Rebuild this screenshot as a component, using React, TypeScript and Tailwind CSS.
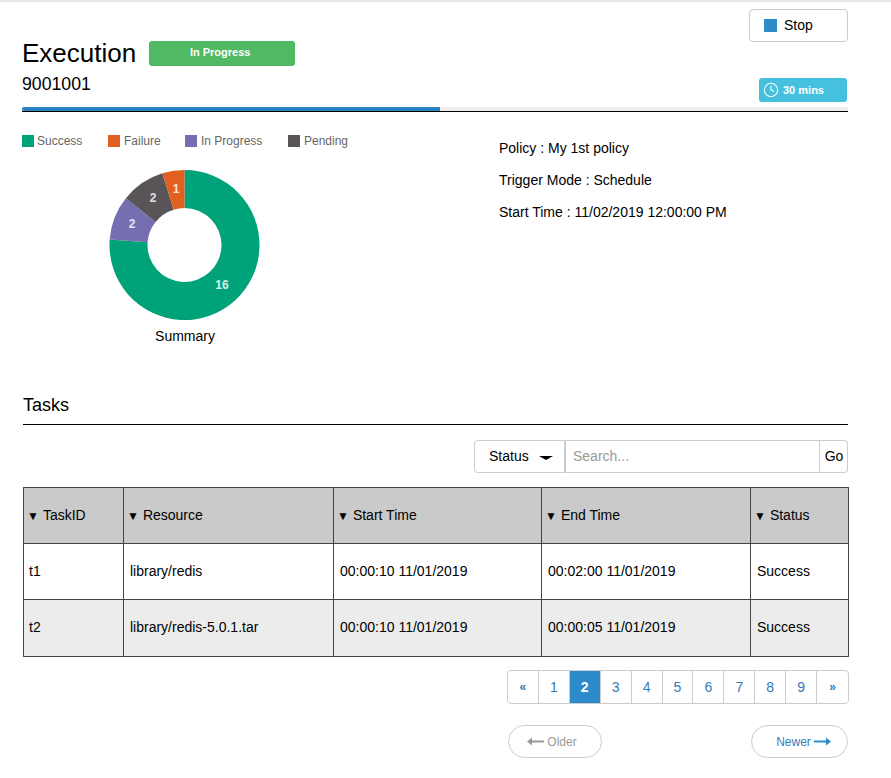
import { Clock } from 'lucide-react'

const legend = [
  { label: 'Success', color: 'bg-[#00a279]', width: 'w-[86px]', gap: 'mr-[3px]' },
  { label: 'Failure', color: 'bg-[#e2601f]', width: 'w-[77px]', gap: 'mr-[4px]' },
  { label: 'In Progress', color: 'bg-[#756eb1]', width: 'w-[103px]', gap: 'mr-[4px]' },
  { label: 'Pending', color: 'bg-[#595458]', width: 'w-[70px]', gap: 'mr-[4px]' },
]

const info = ['Policy : My 1st policy', 'Trigger Mode : Schedule', 'Start Time : 11/02/2019 12:00:00 PM']

const columns = [
  { label: 'TaskID', width: 'w-[100px]' },
  { label: 'Resource', width: 'w-[210px]' },
  { label: 'Start Time', width: 'w-[208px]' },
  { label: 'End Time', width: 'w-[209px]' },
  { label: 'Status', width: 'w-[98px]' },
]

const tasks = [
  { id: 't1', resource: 'library/redis', start: '00:00:10 11/01/2019', end: '00:02:00 11/01/2019', status: 'Success' },
  { id: 't2', resource: 'library/redis-5.0.1.tar', start: '00:00:10 11/01/2019', end: '00:00:05 11/01/2019', status: 'Success' },
]

const pages = ['«', '1', '2', '3', '4', '5', '6', '7', '8', '9', '»']

// donut slices, clockwise from 12 o'clock
const slices = [
  { value: 16, color: '#00a279' },
  { value: 2, color: '#756eb1' },
  { value: 2, color: '#595458' },
  { value: 1, color: '#e2601f' },
]

function slicePath(from: number, to: number) {
  const r1 = 75
  const r2 = 37
  const c = 75.5
  const pt = (r: number, a: number) => `${c + r * Math.sin(a)} ${c + 0.5 - r * Math.cos(a)}`
  const large = to - from > Math.PI ? 1 : 0
  return `M${pt(r1, from)} A${r1} ${r1} 0 ${large} 1 ${pt(r1, to)} L${pt(r2, to)} A${r2} ${r2} 0 ${large} 0 ${pt(r2, from)} Z`
}

function Donut() {
  let start = 0
  return (
    <svg width="152" height="152" viewBox="0 0 152 152" className="block">
      {slices.map((s) => {
        const end = start + (s.value / 21) * Math.PI * 2
        const d = slicePath(start, end)
        start = end
        return <path key={s.color} d={d} fill={s.color} />
      })}
      <g className="text-[12px] font-bold" textAnchor="middle" fontFamily="Liberation Sans, sans-serif">
        <text x="113" y="120" fill="#d8efe8">16</text>
        <text x="23" y="59" fill="#e3e2ef">2</text>
        <text x="44" y="33" fill="#e3e2e3">2</text>
        <text x="67" y="24" fill="#f8e0d3">1</text>
      </g>
    </svg>
  )
}

export default function App() {
  return (
    <main className="h-[778px] w-[891px] overflow-hidden border-t-2 border-[#e7e7e7] bg-white pl-[22px] pr-[43px] font-['Liberation_Sans',sans-serif] text-black">
      <div className="flex h-[105px] justify-between">
        <div className="pt-[38px]">
          <div className="flex h-[27px] items-center">
            <h1 className="text-[26px] leading-[27px]">Execution</h1>
            <span className="ml-[13px] flex h-[25px] w-[146px] items-center justify-center rounded-[3px] bg-[#50b964] pb-[2px] pr-[4px] text-[11px] font-bold text-white">
              In Progress
            </span>
          </div>
          <p className="mt-[5px] text-[17.7px] leading-[24px]">9001001</p>
        </div>
        <div className="flex flex-col items-end">
          <button className="mt-[7px] flex h-[33px] w-[99px] items-center rounded-[4px] border border-[#cccccc] pl-[14px] text-[14px]">
            <span className="mr-[7px] h-[13px] w-[13px] bg-[#2e8bcb]" />
            Stop
          </button>
          <span className="mr-[1px] mt-[36px] flex h-[24px] w-[88px] items-center gap-[4px] rounded-[3px] bg-[#45c0de] pl-[4px] text-[11px] font-bold text-white">
            <Clock size={16} strokeWidth={1.6} />
            30 mins
          </span>
        </div>
      </div>

      <div className="h-[4px] w-[826px] bg-[#eeeeee]">
        <div className="h-[4px] w-[418px] rounded-l-[2px] bg-[#2b83c4]" />
      </div>
      <div className="h-px w-[826px] bg-black" />

      <div className="flex h-[279px]">
        <div className="w-[477px]">
          <div className="flex pt-[23px]">
            {legend.map((item) => (
              <div key={item.label} className={`flex h-[12px] items-center ${item.width}`}>
                <span className={`h-[12px] w-[12px] ${item.gap} ${item.color}`} />
                <span className="text-[12px] text-[#666666]">{item.label}</span>
              </div>
            ))}
          </div>
          <div className="ml-[87px] mt-[22px] w-[152px]">
            <Donut />
            <p className="mt-[5px] text-center text-[14px] leading-[20px]">Summary</p>
          </div>
        </div>
        <div className="flex flex-col gap-[12px] pt-[26px] text-[14px] leading-[20px]">
          {info.map((line) => (
            <p key={line}>{line}</p>
          ))}
        </div>
      </div>

      <h2 className="ml-px mt-[2px] text-[18px] leading-[24px]">Tasks</h2>
      <div className="ml-px mt-[7px] h-px w-[825px] bg-black" />

      <div className="mt-[15px] flex h-[33px] justify-end text-[14px]">
        <button className="flex w-[91px] items-center rounded-l-[4px] border border-[#cccccc] pl-[14px]">
          Status
          <span className="ml-[10px] mt-[2px] h-0 w-0 border-x-[7px] border-t-[4px] border-x-transparent border-t-black" />
        </button>
        <input
          placeholder="Search..."
          className="w-[255px] border border-[#cccccc] pl-[7px] outline-none placeholder:text-[#999999]"
        />
        <button className="w-[28px] rounded-r-[4px] border-y border-r border-[#cccccc] pl-px">Go</button>
      </div>

      <table className="ml-px mt-[14px] w-[825px] table-fixed border-collapse text-[14px]">
        <thead>
          <tr className="h-[56px] bg-[#cacaca]">
            {columns.map((col) => (
              <th key={col.label} className={`border border-[#444444] pl-[3px] text-left font-normal ${col.width}`}>
                <span className="mr-[4px] text-[12px]">▼</span>
                {col.label}
              </th>
            ))}
          </tr>
        </thead>
        <tbody>
          {tasks.map((task, i) => (
            <tr key={task.id} className={i === 1 ? 'h-[57px] bg-[#ececec]' : 'h-[56px] bg-white'}>
              {[task.id, task.resource, task.start, task.end, task.status].map((cell, j) => (
                <td key={j} className={`border border-[#444444] ${j === 0 ? 'pl-[5px]' : 'pl-[6px]'} ${i === 1 ? 'pb-px' : ''}`}>
                  {cell}
                </td>
              ))}
            </tr>
          ))}
        </tbody>
      </table>

      <div className="ml-[485px] mt-[13px] flex h-[34px] w-[342px] overflow-hidden rounded-[4px] border border-[#cccccc] text-[14px] text-[#337ab7]">
        {pages.map((p) => (
          <span
            key={p}
            className={`flex w-[31px] items-center justify-center border-r border-[#cccccc] last:border-r-0 ${p === '2' ? 'bg-[#2e8bcb] font-bold text-white' : ''} ${p === '«' || p === '»' ? 'text-[12px] font-bold' : ''}`}
          >
            {p}
          </span>
        ))}
      </div>

      <div className="ml-[486px] mt-[21px] flex w-[340px] justify-between text-[12px]">
        <button className="flex h-[33px] w-[94px] items-center justify-center gap-[3px] rounded-full border border-[#cccccc] pr-[6px] text-[#999999]">
          <svg width="17" height="9" viewBox="0 0 17 9" fill="#999999">
            <path d="M0 4.5 5 .5v3h12v2H5v3z" />
          </svg>
          Older
        </button>
        <button className="flex h-[33px] w-[97px] items-center justify-center gap-[3px] rounded-full border border-[#cccccc] pl-[8px] text-[#337ab7]">
          Newer
          <svg width="17" height="9" viewBox="0 0 17 9" fill="#2e8bcb">
            <path d="M17 4.5 12 .5v3H0v2h12v3z" />
          </svg>
        </button>
      </div>
    </main>
  )
}
